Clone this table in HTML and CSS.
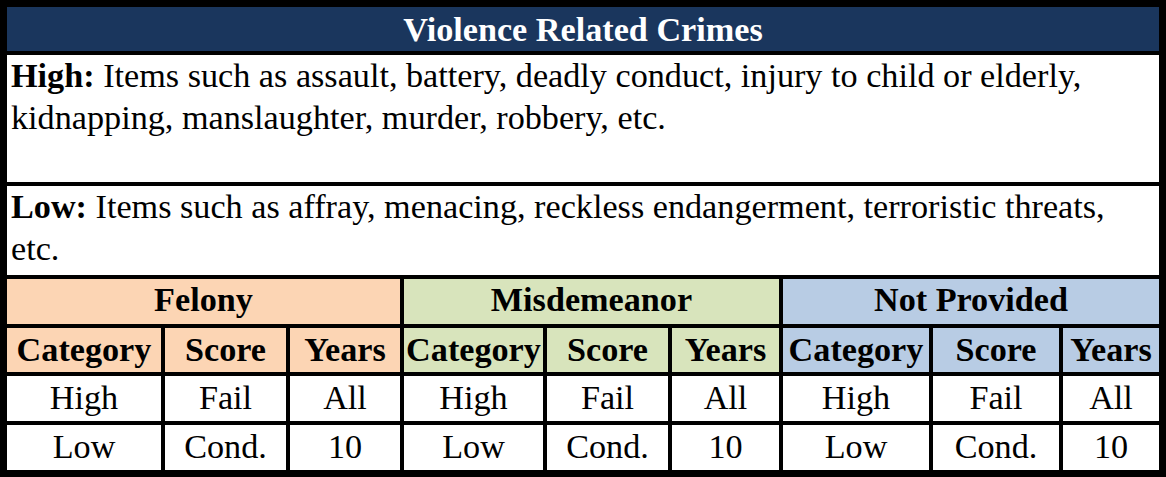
FILE: index.html
```html
<!DOCTYPE html>
<html lang="en">
<head>
<meta charset="utf-8">
<title>Violence Related Crimes</title>
<link rel="stylesheet" href="styles.css">
</head>
<body>
<div class="sheet">
  <div class="title">Violence Related Crimes</div>
  <div class="desc desc-high"><span class="label">High:</span> Items such as assault, battery, deadly conduct, injury to child or elderly, kidnapping, manslaughter, murder, robbery, etc.</div>
  <div class="desc desc-low"><span class="label">Low:</span> Items such as affray, menacing, reckless endangerment, terroristic threats, etc.</div>

  <div class="group felony">Felony</div>
  <div class="group misd">Misdemeanor</div>
  <div class="group np">Not Provided</div>

  <div class="head felony">Category</div>
  <div class="head felony">Score</div>
  <div class="head felony">Years</div>
  <div class="head misd">Category</div>
  <div class="head misd">Score</div>
  <div class="head misd">Years</div>
  <div class="head np">Category</div>
  <div class="head np">Score</div>
  <div class="head np">Years</div>

  <div class="cell">High</div>
  <div class="cell">Fail</div>
  <div class="cell">All</div>
  <div class="cell">High</div>
  <div class="cell">Fail</div>
  <div class="cell">All</div>
  <div class="cell">High</div>
  <div class="cell">Fail</div>
  <div class="cell">All</div>

  <div class="cell">Low</div>
  <div class="cell">Cond.</div>
  <div class="cell">10</div>
  <div class="cell">Low</div>
  <div class="cell">Cond.</div>
  <div class="cell">10</div>
  <div class="cell">Low</div>
  <div class="cell">Cond.</div>
  <div class="cell">10</div>
</div>
</body>
</html>
```

FILE: styles.css
```css
html, body {
  margin: 0;
  padding: 0;
  background: #ffffff;
}

.sheet {
  box-sizing: border-box;
  width: 1166px;
  height: 477px;
  padding: 7px;
  background: #000000;
  display: grid;
  grid-template-columns: 154px 121px 110px 139px 121px 107px 146px 126px 96px;
  grid-template-rows: 44px 127px 89px 45px 44px 45px 45px;
  gap: 4px;
  font-family: "Liberation Serif", "Times New Roman", serif;
  font-size: 34.2px;
  color: #000000;
}

.title {
  grid-column: 1 / -1;
  background: #1a365d;
  color: #ffffff;
  font-weight: bold;
  text-align: center;
  line-height: 42px;
  padding-top: 2px;
}

.desc {
  grid-column: 1 / -1;
  background: #ffffff;
  line-height: 41.5px;
  padding: 0 6px 0 4px;
}

.label {
  font-weight: bold;
}

.group {
  grid-column: span 3;
  font-weight: bold;
  text-align: center;
  line-height: 41px;
}

.head {
  font-weight: bold;
  text-align: center;
  line-height: 44px;
  white-space: nowrap;
}

.cell {
  background: #ffffff;
  text-align: center;
  line-height: 43px;
}

.felony { background: #fcd5b4; }
.misd { background: #d8e4bc; }
.np { background: #b8cce4; }
```
